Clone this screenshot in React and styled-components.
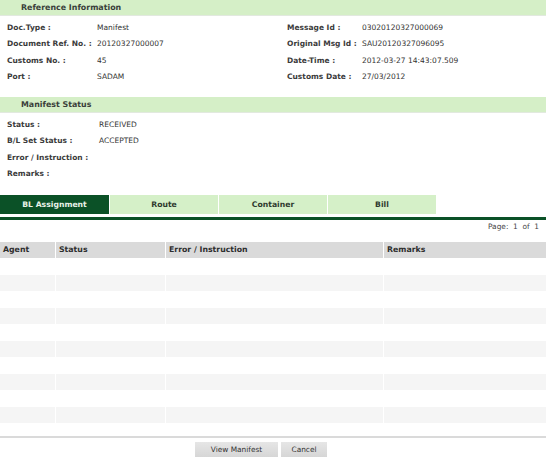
import styled, { createGlobalStyle } from "styled-components";

const GlobalStyle = createGlobalStyle`
  html, body {
    margin: 0;
    padding: 0;
    background: #ffffff;
  }
  body {
    font-family: "DejaVu Sans", Verdana, sans-serif;
    color: #333333;
  }
`;

const refLeft = [
  ["Doc.Type :", "Manifest"],
  ["Document Ref. No. :", "20120327000007"],
  ["Customs No. :", "45"],
  ["Port :", "SADAM"],
];

const refRight = [
  ["Message Id :", "03020120327000069"],
  ["Original Msg Id :", "SAU20120327096095"],
  ["Date-Time :", "2012-03-27 14:43:07.509"],
  ["Customs Date :", "27/03/2012"],
];

const statusRows = [
  ["Status :", "RECEIVED"],
  ["B/L Set Status :", "ACCEPTED"],
  ["Error / Instruction :", ""],
  ["Remarks :", ""],
];

const tabs = ["BL Assignment", "Route", "Container", "Bill"];
const columns = ["Agent", "Status", "Error / Instruction", "Remarks"];
const emptyRows = Array.from({ length: 10 }, (_, i) => i);

const App = () => {
  return (
    <Page>
      <GlobalStyle />
      <SectionBar>Reference Information</SectionBar>
      <InfoGrid>
        <InfoColumn>
          {refLeft.map(([label, value]) => (
            <InfoRow key={label}>
              <Label $width={90}>{label}</Label>
              <Value>{value}</Value>
            </InfoRow>
          ))}
        </InfoColumn>
        <InfoColumn $right>
          {refRight.map(([label, value]) => (
            <InfoRow key={label}>
              <Label $width={75}>{label}</Label>
              <Value>{value}</Value>
            </InfoRow>
          ))}
        </InfoColumn>
      </InfoGrid>

      <SectionBar>Manifest Status</SectionBar>
      <InfoGrid>
        <InfoColumn>
          {statusRows.map(([label, value]) => (
            <InfoRow key={label}>
              <Label $width={92}>{label}</Label>
              <Value>{value}</Value>
            </InfoRow>
          ))}
        </InfoColumn>
      </InfoGrid>

      <TabBar>
        {tabs.map((t, i) => (
          <Tab key={t} $active={i === 0}>
            {t}
          </Tab>
        ))}
      </TabBar>
      <TabLine />
      <Pager>Page:&nbsp; 1&nbsp; of&nbsp; 1</Pager>

      <Table>
        <HeadRow>
          {columns.map((c) => (
            <HeadCell key={c}>{c}</HeadCell>
          ))}
        </HeadRow>
        {emptyRows.map((r) => (
          <BodyRow key={r}>
            {columns.map((c) => (
              <BodyCell key={c} $shade={r % 2 === 1} />
            ))}
          </BodyRow>
        ))}
      </Table>

      <Footer>
        <Button>View Manifest</Button>
        <Button $small>Cancel</Button>
      </Footer>
    </Page>
  );
};

export default App;

const Page = styled.div`
  width: 546px;
  height: 470px;
  overflow: hidden;
  display: flex;
  flex-direction: column;
`;

const SectionBar = styled.div`
  flex-shrink: 0;
  height: 15px;
  line-height: 15px;
  background: #d5efc7;
  border-bottom: 1px solid #e2e9df;
  padding-left: 21px;
  font-size: 7.9px;
  font-weight: bold;
  color: #3a3f3a;
`;

const InfoGrid = styled.div`
  display: grid;
  grid-template-columns: 273px 273px;
  padding-top: 3px;
  margin-bottom: 12px;
`;

const InfoColumn = styled.div`
  display: flex;
  flex-direction: column;
  padding-left: ${(p) => (p.$right ? "14px" : "7px")};
`;

const InfoRow = styled.div`
  display: flex;
  align-items: center;
  height: 16.5px;
  font-size: 7.5px;
`;

const Label = styled.span`
  width: ${(p) => p.$width}px;
  flex-shrink: 0;
  font-weight: bold;
  color: #3b3b3b;
  white-space: nowrap;
`;

const Value = styled.span`
  color: #333333;
  white-space: nowrap;
`;

const TabBar = styled.div`
  display: flex;
  gap: 1px;
  height: 19px;
  margin-top: 1px;
  flex-shrink: 0;
`;

const Tab = styled.div`
  width: 108px;
  display: flex;
  align-items: center;
  justify-content: center;
  font-size: 7.7px;
  font-weight: bold;
  background: ${(p) => (p.$active ? "#0b5127" : "#d5f0c8")};
  color: ${(p) => (p.$active ? "#e9f3e9" : "#2f3a2f")};
  &:first-child {
    width: 109px;
  }
`;

const TabLine = styled.div`
  flex-shrink: 0;
  margin-top: 3px;
  height: 3px;
  background: #0b5127;
`;

const Pager = styled.div`
  flex-shrink: 0;
  height: 22px;
  line-height: 14px;
  text-align: right;
  padding-right: 7px;
  font-size: 7.4px;
  color: #444444;
`;

const Table = styled.div`
  flex-shrink: 0;
  display: flex;
  flex-direction: column;
  height: 194px;
`;

const HeadRow = styled.div`
  display: grid;
  grid-template-columns: 55px 109px 217px 1fr;
  column-gap: 1px;
  height: 16px;
  flex-shrink: 0;
`;

const HeadCell = styled.div`
  background: #dadada;
  font-size: 7.8px;
  font-weight: bold;
  color: #2e2e2e;
  line-height: 16px;
  padding-left: 3px;
`;

const BodyRow = styled(HeadRow)`
  height: 16.5px;
`;

const BodyCell = styled.div`
  background: ${(p) => (p.$shade ? "#f5f5f5" : "#ffffff")};
`;

const Footer = styled.div`
  flex-shrink: 0;
  border-top: 2px solid #dadada;
  display: flex;
  justify-content: center;
  gap: 3px;
  padding: 4px 24px 0 0;
`;

const Button = styled.button`
  width: ${(p) => (p.$small ? "46px" : "83px")};
  height: 15px;
  padding: 0;
  border: none;
  background: linear-gradient(#e6e6e6, #d6d6d6);
  font-family: "DejaVu Sans", Verdana, sans-serif;
  font-size: 7.4px;
  color: #333333;
`;
